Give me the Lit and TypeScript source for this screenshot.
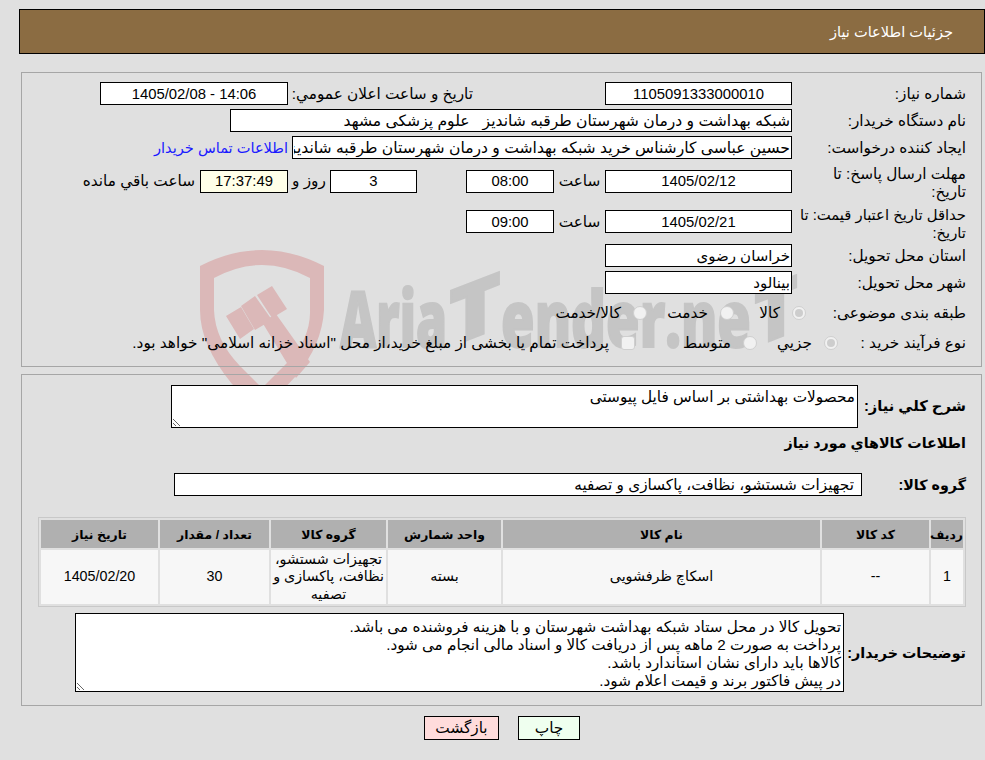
import { LitElement, html, css } from "lit";
import { customElement } from "lit/decorators.js";

@customElement("app-root")
export class AppRoot extends LitElement {
  static styles = css`
    :host { display: block; position: relative; height: 760px; overflow: hidden; background: #e0e0e0; color: #000;
      font: 15.3px "Liberation Sans", "DejaVu Sans", sans-serif; }
    * { box-sizing: border-box; }
    .wm { position: absolute; inset: 0; width: 985px; height: 760px; }
    .wm text { font-family: "Open Sans", "Liberation Sans", sans-serif; font-weight: 800; fill: #c5c5c5; stroke: #c5c5c5; stroke-width: 2px; }
    .page { position: relative; display: flex; flex-direction: column; padding: 9px 0 0 19px; direction: rtl; }
    .head { height: 45px; background: #8b6c42; border: 1px solid #000; color: #fff; display: flex; align-items: center; padding-right: 31px; font-size: 14.6px; }
    .panel { border: 1px solid #a6a6a6; margin: 0 3px 0 0; margin-left: 2px; }
    .p1 { margin-top: 18px; height: 295px; padding: 9px 15px 0 0; display: grid; grid-template-rows: 23px 23px 23px 36px 37px 23px 23px 30px 22px; row-gap: 4px; }
    .p2 { margin-top: 7px; height: 332px; padding: 10px 15px 0 15px; display: flex; flex-direction: column; }
    .row { display: flex; align-items: center; }
    .label { width: 174px; flex: none; line-height: 18px; }
    .lift { position: relative; top: 2px; }
    .tight { font-size: 14.8px; }
    .box { height: 23px; flex: none; border: 1px solid #000; background: #fff; font: inherit; color: #000; padding: 0 3px; text-align: center; outline: none; direction: rtl; }
    .num { font-size: 14.85px; }
    .left { text-align: right; padding: 0 1px; font-size: 15.6px; }
    .w187 { width: 187px; }
    .w187.left { font-size: 15px; }
    .w188 { width: 188px; }
    .w88 { width: 88px; }
    .w562 { width: 562px; }
    .w500 { width: 500px; }
    .yellow { background: #ffffe8; }
    .hour { width: 51px; text-align: center; flex: none; }
    .gap-a { margin-right: 132px; width: 180px; flex: none; white-space: nowrap; }
    .mr5 { margin-right: 5px; }
    .mr4 { margin-right: 4px; }
    .days { margin-right: 49px; width: 87px; }
    .ruz { width: 42px; text-align: center; flex: none; }
    a { color: #1a1aff; text-decoration: none; font-size: 14.6px; }
    .lab8 { width: 160px; flex: none; }
    .lab9 { width: 128px; flex: none; }
    .opt { display: flex; align-items: center; gap: 12px; flex: none; }
    .o72 { width: 72px; } .o87 { width: 87px; } .o81 { width: 81px; } .o122 { width: 122px; }
    .radio, .check { appearance: none; width: 14px; height: 14px; margin: 0; flex: none; background: #f1f1f1; border: 1px solid #cfcfcf; display: grid; place-items: center; }
    .radio { border-radius: 50%; }
    .check { border-radius: 3px; }
    .radio:checked::after { content: ""; width: 8px; height: 8px; border-radius: 50%; background: #cdcdcd; }
    .bold { font-weight: 700; font-size: 14.3px; white-space: nowrap; }
    .summary { align-items: flex-start; height: 43px; }
    .summary .bold { width: 108px; flex: none; line-height: 43px; font-size: 14.7px; }
    textarea.box { display: block; resize: both; text-align: right; line-height: 18px; overflow: hidden; padding: 2px; }
    .sumbox { width: 687px; height: 43px; }
    .title { margin-top: 6px; height: 18px; line-height: 18px; }
    .grp { margin-top: 21px; }
    .grp .bold { width: 104px; flex: none; }
    .w688 { width: 688px; padding: 0 7px; font-size: 15.3px; }
    table { margin-top: 21px; width: 928px; border: 1px solid #c8c8c8; border-spacing: 2px; background: #e0e0e0; table-layout: fixed; height: 90px; font-size: 14.3px; }
    th { background: #b0b0b0; height: 28px; font-size: 12.4px; padding: 0; }
    td { background: #f7f7f7; text-align: center; padding: 0; height: 54px; line-height: 17.5px; white-space: nowrap; }
    .c1 { width: 32px; } .c2 { width: 107px; } .c3 { width: 317px; } .c4 { width: 113px; } .c5 { width: 115px; } .c6 { width: 109px; } .c7 { width: 117px; }
    .notes { margin-top: 6px; align-items: center; height: 79px; }
    .notes .bold { width: 122px; flex: none; }
    .nbox { width: 769px; height: 79px; padding-top: 4px !important; font-size: 15.2px; }
    .btns { display: flex; gap: 19px; margin: 10px 0 0 0; direction: rtl; padding-right: 405px; }
    .btn { height: 24px; border: 1px solid #000; font: inherit; color: #000; padding: 0; }
    .print { width: 62px; background: #efffef; }
    .back { width: 75px; background: #ffdcdc; }
  `;

  render() {
    return html`
      <svg class="wm" viewBox="0 0 985 760" aria-hidden="true">
        <path fill="#dbb8b8" fill-rule="evenodd" d="M200 266 Q262 234 324 266 L324 310 Q322 345 296 376 L262 412 L232 384 Q200 345 200 310 Z M214 278 L214 310 Q215 340 240 366 L262 388 L284 366 Q311 340 310 310 L310 278 Q262 252 214 278 Z"/>
        <path fill="#dbb8b8" d="M226 316 L241 307 L254 329 L240 339 Z M241 306 L255 296 L272 320 L255 330 Z M257 295 L272 286 L287 309 L272 318 Z M262 322 L276 314 L310 362 L296 378 Z"/>
        <text x="340" y="347" font-size="78" textLength="107" lengthAdjust="spacingAndGlyphs">Aria</text>
        <text transform="translate(449 347) skewY(-21)" font-size="78" textLength="52" lengthAdjust="spacingAndGlyphs">T</text>
        <text x="501" y="347" font-size="78" textLength="250" lengthAdjust="spacingAndGlyphs">ender.ne</text>
        <text transform="translate(754 347) skewY(-21)" font-size="78" textLength="44" lengthAdjust="spacingAndGlyphs">T</text>
      </svg>
      <div class="page">
        <div class="head">جزئیات اطلاعات نیاز</div>
        <section class="panel p1">
          <div class="row">
            <span class="label">شماره نیاز:</span>
            <input class="box num w187" readonly value="1105091333000010" />
            <span class="gap-a">تاریخ و ساعت اعلان عمومي:</span>
            <input class="box num w188 mr5" readonly value="14:06 - 1405/02/08" />
          </div>
          <div class="row">
            <span class="label">نام دستگاه خریدار:</span>
            <input class="box w562 left" readonly value="شبکه بهداشت و درمان شهرستان طرقبه شاندیز   علوم پزشکی مشهد" />
          </div>
          <div class="row">
            <span class="label">ایجاد کننده درخواست:</span>
            <input class="box w500 left" readonly value="حسین عباسی کارشناس خرید شبکه بهداشت و درمان شهرستان طرقبه شاندیز" />
            <a class="mr4" href="#">اطلاعات تماس خریدار</a>
          </div>
          <div class="row">
            <span class="label lift">مهلت ارسال پاسخ: تا<br />تاریخ:</span>
            <input class="box num w187" readonly value="1405/02/12" />
            <span class="hour">ساعت</span>
            <input class="box num w88" readonly value="08:00" />
            <input class="box num days" readonly value="3" />
            <span class="ruz">روز و</span>
            <input class="box num w88 yellow" readonly value="17:37:49" />
            <span class="mr5">ساعت باقي مانده</span>
          </div>
          <div class="row">
            <span class="label lift tight">حداقل تاریخ اعتبار قیمت: تا<br />تاریخ:</span>
            <input class="box num w187" readonly value="1405/02/21" />
            <span class="hour">ساعت</span>
            <input class="box num w88" readonly value="09:00" />
          </div>
          <div class="row">
            <span class="label">استان محل تحویل:</span>
            <input class="box w187 left" readonly value="خراسان رضوی" />
          </div>
          <div class="row">
            <span class="label">شهر محل تحویل:</span>
            <input class="box w187 left" readonly value="بینالود" />
          </div>
          <div class="row">
            <span class="lab8">طبقه بندی موضوعی:</span>
            <label class="opt o72"><input class="radio" type="radio" name="a" checked disabled />کالا</label>
            <label class="opt o87"><input class="radio" type="radio" name="a" disabled />خدمت</label>
            <label class="opt"><input class="radio" type="radio" name="a" disabled />کالا/خدمت</label>
          </div>
          <div class="row">
            <span class="lab9">نوع فرآیند خرید :</span>
            <label class="opt o81"><input class="radio" type="radio" name="b" checked disabled />جزيي</label>
            <label class="opt o122"><input class="radio" type="radio" name="b" disabled />متوسط</label>
            <label class="opt"><input class="check" type="checkbox" disabled />پرداخت تمام یا بخشی از مبلغ خرید،از محل "اسناد خزانه اسلامی" خواهد بود.</label>
          </div>
        </section>
        <section class="panel p2">
          <div class="row summary">
            <span class="bold">شرح کلي نیاز:</span>
            <textarea class="box sumbox" readonly>محصولات بهداشتی بر اساس فایل پیوستی</textarea>
          </div>
          <div class="bold title">اطلاعات کالاهاي مورد نیاز</div>
          <div class="row grp">
            <span class="bold">گروه کالا:</span>
            <input class="box w688 left" readonly value="تجهیزات شستشو، نظافت، پاکسازی و تصفیه" />
          </div>
          <table>
            <colgroup><col class="c1" /><col class="c2" /><col class="c3" /><col class="c4" /><col class="c5" /><col class="c6" /><col class="c7" /></colgroup>
            <tr><th>ردیف</th><th>کد کالا</th><th>نام کالا</th><th>واحد شمارش</th><th>گروه کالا</th><th>تعداد / مقدار</th><th>تاریخ نیاز</th></tr>
            <tr><td>1</td><td>--</td><td>اسکاچ ظرفشویی</td><td>بسته</td><td>تجهیزات شستشو،<br />نظافت، پاکسازی و<br />تصفیه</td><td>30</td><td>1405/02/20</td></tr>
          </table>
          <div class="row notes">
            <span class="bold">توضیحات خریدار:</span>
            <textarea class="box nbox" readonly>تحویل کالا در محل ستاد شبکه بهداشت شهرستان و با هزینه فروشنده می باشد.
پرداخت به صورت 2 ماهه پس از دریافت کالا و اسناد مالی انجام می شود.
کالاها باید دارای نشان استاندارد باشد.
در پیش فاکتور برند و قیمت اعلام شود.</textarea>
          </div>
        </section>
        <div class="btns">
          <button class="btn print">چاپ</button>
          <button class="btn back">بازگشت</button>
        </div>
      </div>
    `;
  }
}
